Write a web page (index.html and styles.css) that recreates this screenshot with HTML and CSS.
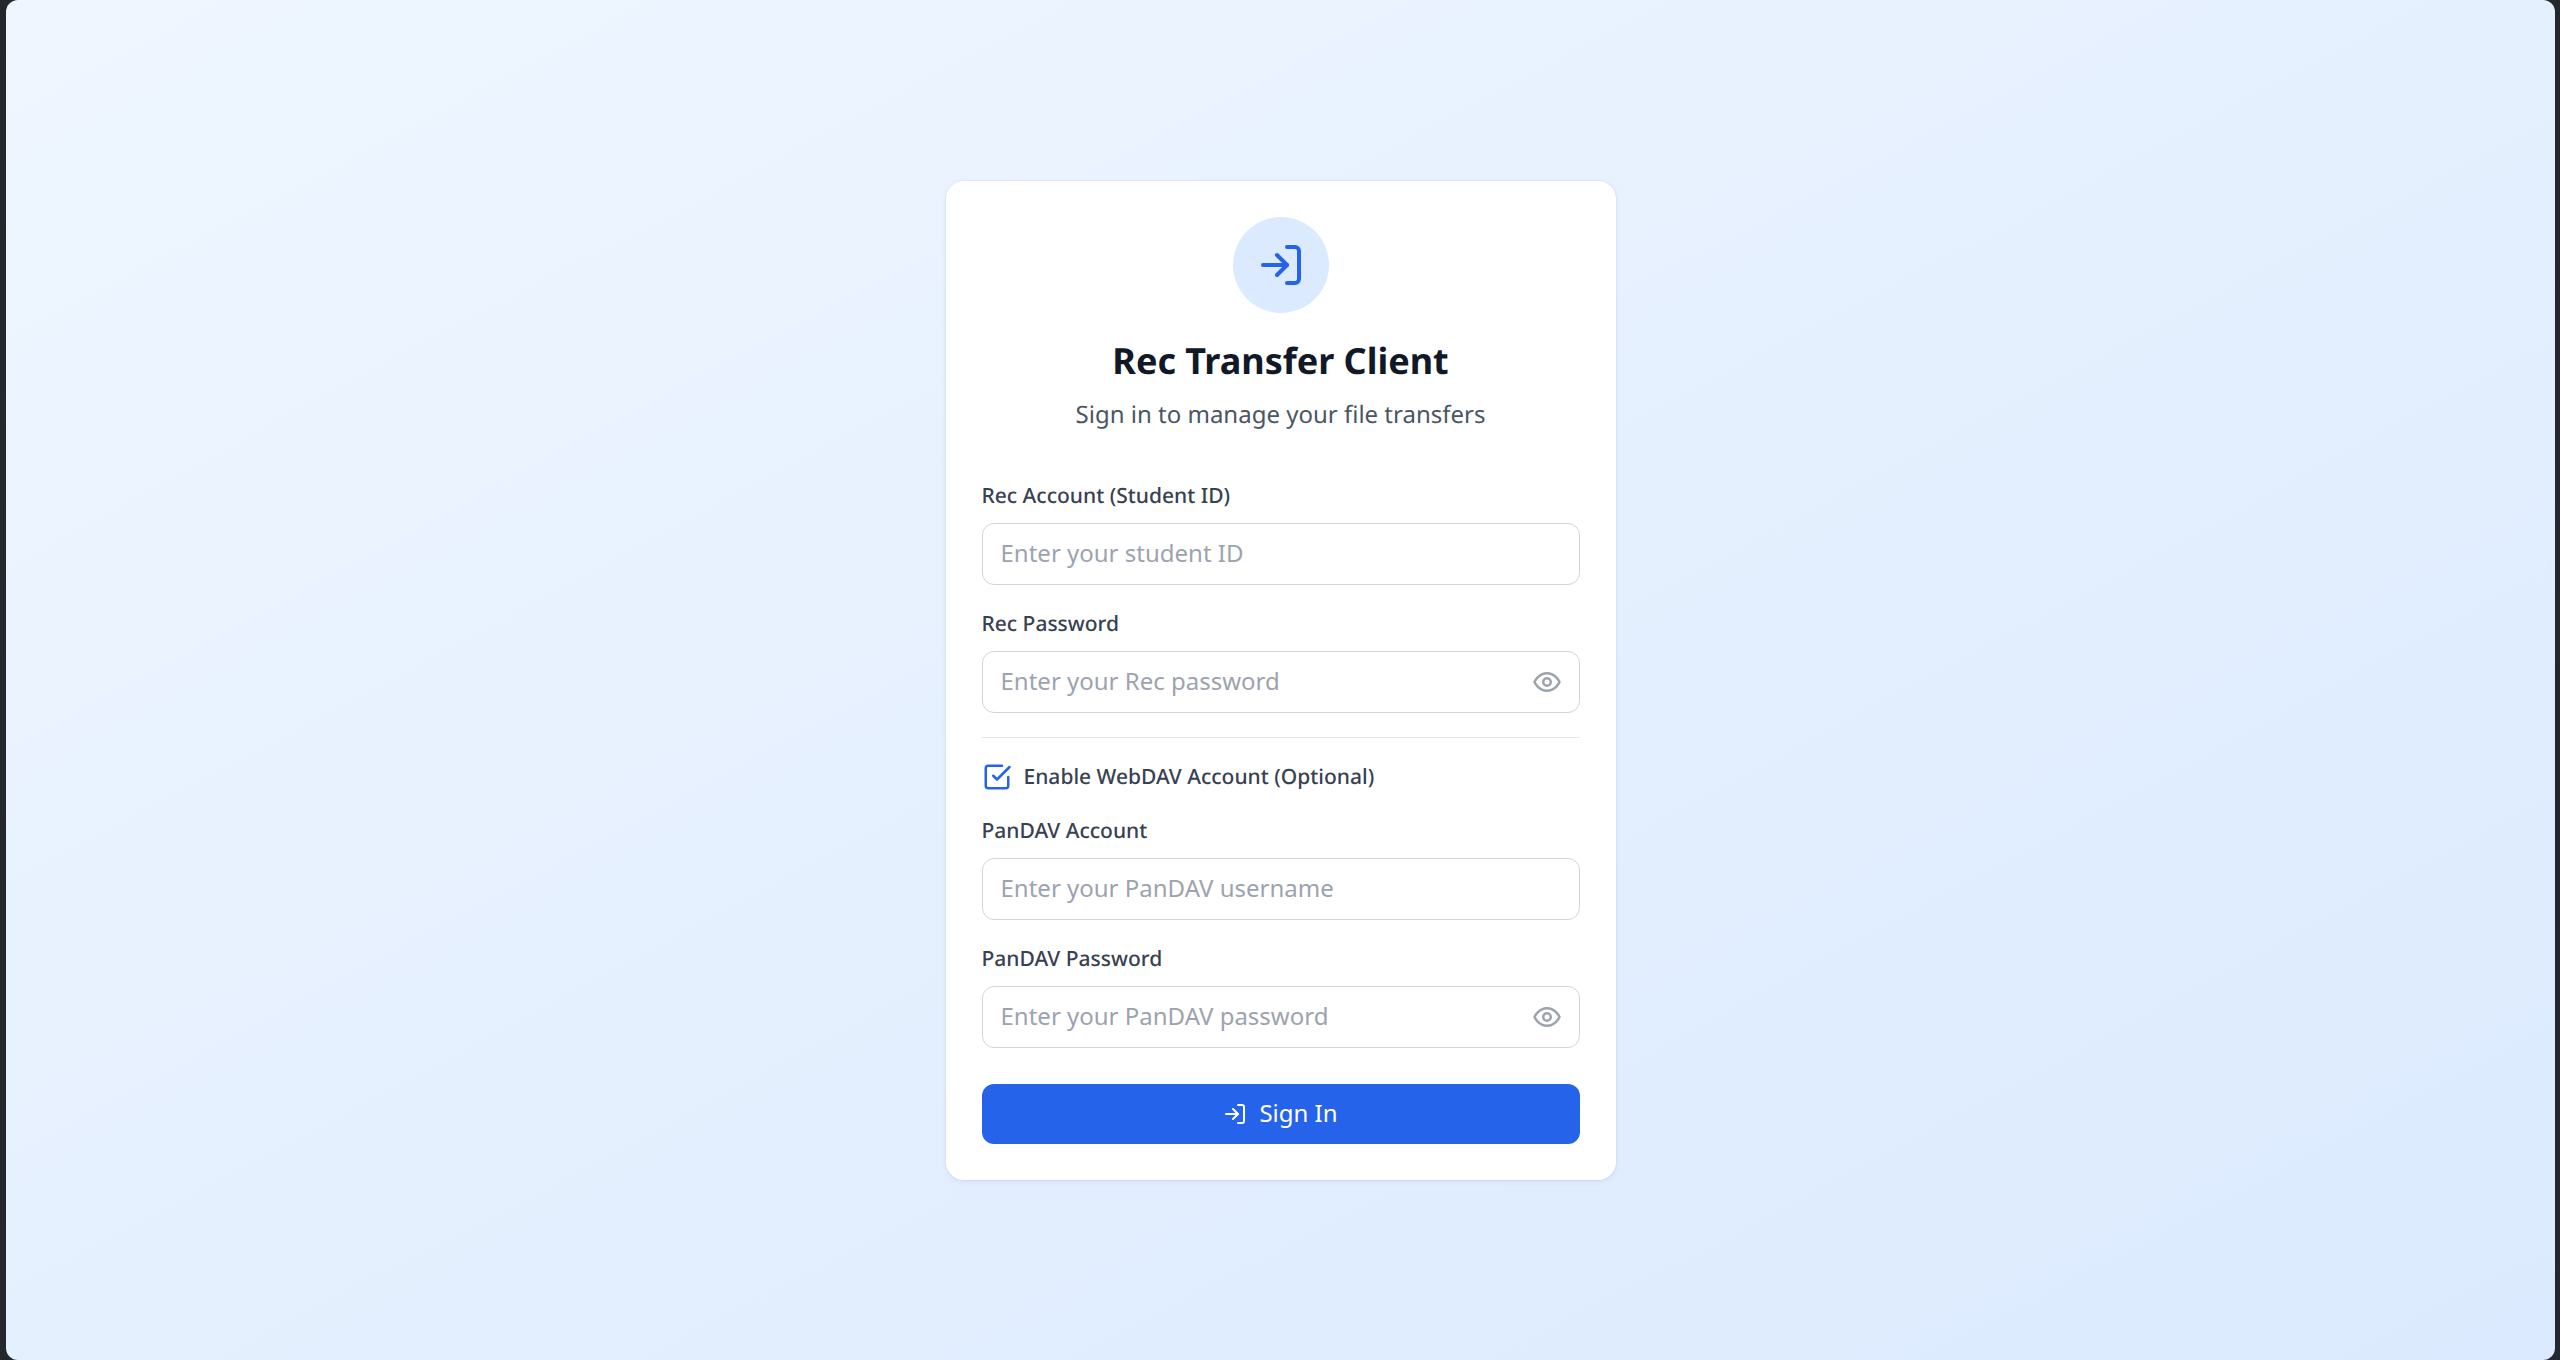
FILE: index.html
```html
<!DOCTYPE html>
<html lang="en">
<head>
<meta charset="utf-8">
<title>Rec Transfer Client</title>
<link rel="stylesheet" href="styles.css">
</head>
<body>
<main class="window">
  <form class="card">
    <header class="head">
      <div class="badge">
        <svg class="badge-icon" viewBox="0 0 24 24"><path d="M15 3h4a2 2 0 0 1 2 2v14a2 2 0 0 1-2 2h-4"/><path d="M10 17l5-5-5-5"/><path d="M15 12H3"/></svg>
      </div>
      <h1 class="title">Rec Transfer Client</h1>
      <p class="subtitle">Sign in to manage your file transfers</p>
    </header>
    <div class="field">
      <label class="label">Rec Account (Student ID)</label>
      <input class="input" type="text" placeholder="Enter your student ID">
    </div>
    <div class="field">
      <label class="label">Rec Password</label>
      <div class="input-wrap">
        <input class="input" type="password" placeholder="Enter your Rec password">
        <svg class="eye" viewBox="0 0 24 24"><path d="M2 12s3-7 10-7 10 7 10 7-3 7-10 7-10-7-10-7Z"/><circle cx="12" cy="12" r="3"/></svg>
      </div>
    </div>
    <hr class="divider">
    <div class="check-row">
      <svg class="check" viewBox="0 0 24 24"><path d="M9 11l3 3L22 4"/><path d="M21 12v7a2 2 0 0 1-2 2H5a2 2 0 0 1-2-2V5a2 2 0 0 1 2-2h11"/></svg>
      <span class="check-label">Enable WebDAV Account (Optional)</span>
    </div>
    <div class="field">
      <label class="label">PanDAV Account</label>
      <input class="input" type="text" placeholder="Enter your PanDAV username">
    </div>
    <div class="field">
      <label class="label">PanDAV Password</label>
      <div class="input-wrap">
        <input class="input" type="password" placeholder="Enter your PanDAV password">
        <svg class="eye" viewBox="0 0 24 24"><path d="M2 12s3-7 10-7 10 7 10 7-3 7-10 7-10-7-10-7Z"/><circle cx="12" cy="12" r="3"/></svg>
      </div>
    </div>
    <button class="submit" type="button">
      <svg class="submit-icon" viewBox="0 0 24 24"><path d="M15 3h4a2 2 0 0 1 2 2v14a2 2 0 0 1-2 2h-4"/><path d="M10 17l5-5-5-5"/><path d="M15 12H3"/></svg>
      <span class="submit-text">Sign In</span>
    </button>
  </form>
</main>
</body>
</html>
```
FILE: styles.css
```css
* { box-sizing: border-box; }
html, body { height: 100%; }
body {
  margin: 0;
  background: #24282d;
  font-family: "Noto Sans", sans-serif;
  text-rendering: geometricPrecision;
  padding: 0 5px 0 6px;
}
svg { fill: none; stroke: currentColor; stroke-width: 2; stroke-linecap: round; stroke-linejoin: round; display: block; flex: none; }
.window {
  height: 1360px;
  border-radius: 12px;
  background: linear-gradient(to bottom right, #eff6ff, #dbeafe);
  display: flex;
  align-items: center;
  justify-content: center;
}
.card {
  width: 670px;
  padding: 36px;
  background: #fff;
  border-radius: 18px;
  box-shadow: 0 0 0 1px rgba(0,0,0,.03), 0 2px 6px rgba(0,0,0,.06);
  display: flex;
  flex-direction: column;
  gap: 24px;
}
.head { display: flex; flex-direction: column; align-items: center; margin-bottom: 24px; }
.badge {
  width: 96px; height: 96px; border-radius: 50%;
  background: #dbeafe; color: #2563eb;
  display: flex; align-items: center; justify-content: center;
  margin-bottom: 24px;
}
.badge-icon { width: 48px; height: 48px; }
.title { margin: 0 0 12px; font-size: 36px; line-height: 48px; font-weight: 700; color: #111827; }
.subtitle { margin: 0; font-size: 24px; line-height: 36px; color: #4b5563; }
.field { display: flex; flex-direction: column; gap: 12px; }
.label { font-size: 21px; line-height: 30px; font-weight: 500; color: #374151; }
.input-wrap { position: relative; }
.input {
  display: block;
  width: 100%;
  height: 62px;
  padding: 0 18px 2px;
  border: 1.5px solid #d1d5db;
  border-radius: 12px;
  background: #fff;
  font: inherit;
  font-size: 24px;
  color: #111827;
  outline: none;
}
.input::placeholder { color: #9ca3af; opacity: 1; }
.eye { position: absolute; right: 18px; top: 16px; width: 30px; height: 30px; color: #9ca3af; }
.divider { margin: 0; border: 0; border-top: 1.5px solid #e5e7eb; }
.check-row { display: flex; align-items: center; gap: 12px; height: 30px; }
.check { width: 30px; height: 30px; color: #2563eb; }
.check-label { font-size: 21px; line-height: 30px; font-weight: 500; color: #374151; }
.submit {
  height: 60px;
  margin-top: 12px;
  padding: 0 0 2px;
  border: 0;
  border-radius: 12px;
  background: #2563eb;
  color: #fff;
  font: inherit;
  font-size: 24px;
  display: flex; align-items: center; justify-content: center; gap: 12px;
}
.submit-icon { width: 24px; height: 24px; margin-top: 2px; }
```
